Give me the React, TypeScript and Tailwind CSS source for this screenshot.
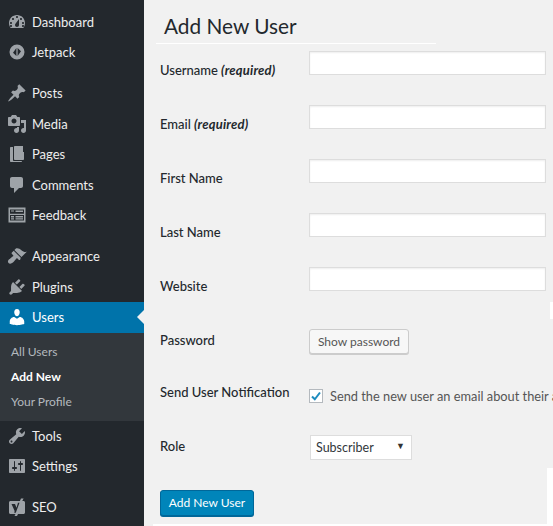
const font = { fontFamily: '"Lato", "Open Sans", sans-serif' };

function Glyph({ d, fill = "#9ea3a8" }: { d: string; fill?: string }) {
  return (
    <svg width="20" height="20" viewBox="0 0 20 20" fill={fill} className="shrink-0">
      <path d={d} fillRule="evenodd" />
    </svg>
  );
}

const icons: Record<string, string> = {
  dashboard:
    "M3.76 16h12.48c1.1-1.37 1.76-3.11 1.76-5 0-4.42-3.58-8-8-8s-8 3.58-8 8c0 1.89.66 3.63 1.76 5zM10 4c.55 0 1 .45 1 1s-.45 1-1 1-1-.45-1-1 .45-1 1-1zM6 6c.55 0 1 .45 1 1s-.45 1-1 1-1-.45-1-1 .45-1 1-1zm8 0c.55 0 1 .45 1 1s-.45 1-1 1-1-.45-1-1 .45-1 1-1zm-5.37 5.55L12 7v6c0 1.1-.9 2-2 2s-2-.9-2-2c0-.57.24-1.08.63-1.45zM4 10c.55 0 1 .45 1 1s-.45 1-1 1-1-.45-1-1 .45-1 1-1zm12 0c.55 0 1 .45 1 1s-.45 1-1 1-1-.45-1-1 .45-1 1-1zm-12 3c.55 0 1 .45 1 1s-.45 1-1 1-1-.45-1-1 .45-1 1-1zm12 0c.55 0 1 .45 1 1s-.45 1-1 1-1-.45-1-1 .45-1 1-1z",
  jetpack:
    "M10 2.5a7.5 7.5 0 1 0 0 15 7.5 7.5 0 0 0 0-15zM9.4 6v8L6 10.8zM10.6 14V6L14 9.2z",
  posts:
    "M10.44 3.02l1.82-1.82 6.36 6.35-1.83 1.82c-1.05-.68-2.48-.57-3.41.36l-.75.75c-.92.93-1.04 2.35-.35 3.41l-1.83 1.82-2.41-2.41-2.8 2.79c-.42.42-3.38 2.71-3.8 2.29s1.86-3.39 2.28-3.81l2.79-2.79L4.1 9.36l1.83-1.82c1.05.69 2.48.57 3.4-.36l.75-.75c.93-.92 1.05-2.35.36-3.41z",
  media:
    "M13 11V4c0-.55-.45-1-1-1h-1.67L9 1H5L3.67 3H2c-.55 0-1 .45-1 1v7c0 .55.45 1 1 1h10c.55 0 1-.45 1-1zM7 4.5c1.38 0 2.5 1.12 2.5 2.5S8.38 9.5 7 9.5 4.5 8.38 4.5 7 5.62 4.5 7 4.5zM14 6h5v10.5c0 1.38-1.12 2.5-2.5 2.5S14 17.88 14 16.5s1.12-2.5 2.5-2.5c.17 0 .34.02.5.05V9h-3V6zm-4 8.05V13h2v3.5c0 1.38-1.12 2.5-2.5 2.5S7 17.88 7 16.5 8.12 14 9.5 14c.17 0 .34.02.5.05z",
  pages:
    "M16 8V2h-8c-.55 0-1 .45-1 1v12c0 .55.45 1 1 1h8c.55 0 1-.45 1-1V8zM6 3H4c-.55 0-1 .45-1 1v13c0 .55.45 1 1 1h10c.55 0 1-.45 1-1H7c-.55 0-1-.45-1-1z",
  comments:
    "M5 2h9c1.1 0 2 .9 2 2v7c0 1.1-.9 2-2 2h-2l-5 5v-5H5c-1.1 0-2-.9-2-2V4c0-1.1.9-2 2-2z",
  feedback:
    "M1.5 2.5h17v15h-17zM3 4.5v4.2h14V4.5zM3 10v5.5h14V10zM4 5.5h3v1H4zM8.5 5.5h7.5v1.5H8.5zM4 11h3v1.5H4zM4 13.3h3v1.2H4zM8.5 11h7.5v1.5H8.5zM8.5 13.3h7.5v1.2H8.5z",
  appearance:
    "M14.48 11.06L7.41 3.99l1.5-1.5c.5-.56 2.3-.47 3.51.32 1.21.8 1.43 1.28 2.91 2.1 1.18.64 2.45 1.26 4.45.85zm-.71.71L6.7 4.7 4.93 6.47c-.39.39-.39 1.02 0 1.41l1.06 1.06c.39.39.39 1.03 0 1.42-.6.6-1.43 1.11-2.21 1.69-.35.26-.7.53-1.01.84C1.43 13.23.13 15.66 1.53 17.06c1.41 1.41 3.85.13 5.18-1.21.31-.31.58-.66.84-1.01.58-.78 1.09-1.61 1.69-2.21.39-.39 1.03-.39 1.42 0l1.06 1.06c.39.39 1.02.39 1.41 0z",
  plugins:
    "M13.11 4.36L9.87 7.6 8 5.73l3.24-3.24c.35-.34 1.05-.2 1.56.32.52.51.66 1.21.31 1.55zm-8 1.77l.91-1.12 9.01 9.01-1.19.84c-.71.71-2.63 1.16-3.82 1.16H6.14L4.9 17.26c-.59.59-1.54.59-2.12 0-.59-.58-.59-1.53 0-2.12l1.24-1.24v-3.88c0-1.13.4-3.19 1.09-3.89zm7.26 3.97l3.24-3.24c.34-.35 1.04-.21 1.55.31.52.51.66 1.21.31 1.55l-3.24 3.25z",
  users:
    "M10 9.25c-2.27 0-2.73-3.44-2.73-3.44C7 4.02 7.82 2 9.97 2c2.16 0 2.98 2.02 2.71 3.81 0 0-.41 3.44-2.68 3.44zm0 2.57L12.72 10c2.39 0 4.52 2.33 4.52 4.53v2.49s-3.65 1.13-7.24 1.13c-3.65 0-7.24-1.13-7.24-1.13v-2.49c0-2.25 1.94-4.48 4.47-4.48z",
  tools:
    "M16.68 9.77c-1.34 1.34-3.3 1.67-4.95.99l-5.41 6.52c-.99.99-2.59.99-3.58 0s-.99-2.59 0-3.57l6.52-5.42c-.68-1.65-.35-3.61.99-4.95 1.28-1.28 3.12-1.62 4.72-1.06l-2.89 2.89 2.82 2.82 2.86-2.87c.53 1.58.18 3.39-1.08 4.65zM3.81 16.21c.4.39 1.04.39 1.43 0 .4-.4.4-1.04 0-1.43-.39-.4-1.03-.4-1.43 0-.39.39-.39 1.03 0 1.43z",
  settings:
    "M18 16V4c0-.55-.45-1-1-1H3c-.55 0-1 .45-1 1v12c0 .55.45 1 1 1h14c.55 0 1-.45 1-1zM8 11h1c.55 0 1 .45 1 1s-.45 1-1 1H8v1.5c0 .28-.22.5-.5.5s-.5-.22-.5-.5V13H6c-.55 0-1-.45-1-1s.45-1 1-1h1V5.5c0-.28.22-.5.5-.5s.5.22.5.5V11zm5-2h-1c-.55 0-1-.45-1-1s.45-1 1-1h1V5.5c0-.28.22-.5.5-.5s.5.22.5.5V7h1c.55 0 1 .45 1 1s-.45 1-1 1h-1v5.5c0 .28-.22.5-.5.5s-.5-.22-.5-.5V9z",
  seo:
    "M3.5 4h9.4L14 1.5h2.6L15.3 4h1.2c.8 0 1.5.7 1.5 1.5v10c0 .8-.7 1.5-1.5 1.5H11l-1 2H7.5l1-2h-5C2.7 17 2 16.3 2 15.5v-10C2 4.7 2.7 4 3.5 4zM4.5 7l2.8 6.2c.3.6.4 1 .2 1.6l-.3.9h1.6l3.7-10H11l-1.5 5L8 7z",
};

function MenuItem({ icon, label, gap, active }: { icon: string; label: string; gap?: string; active?: boolean }) {
  return (
    <div className={`relative flex h-[30.5px] items-center pl-[7px] ${gap ?? ""} ${active ? "bg-[#0073aa] text-white" : "text-[#eeeeee]"}`}>
      <div className="flex w-[25px] justify-start">
        <Glyph d={icons[icon]} fill={active ? "#ffffff" : "#9ea3a8"} />
      </div>
      <span className="text-[13px] leading-[18px]">{label}</span>
      {active && (
        <span className="absolute right-0 top-[8px] h-0 w-0 border-y-[7px] border-r-[7px] border-y-transparent border-r-[#f1f1f1]" />
      )}
    </div>
  );
}

function Label({ children, className = "" }: { children: React.ReactNode; className?: string }) {
  return <div className={`w-[149px] shrink-0 text-[13px] font-medium leading-[18px] text-[#23282d] ${className}`}>{children}</div>;
}

function TextRow({ label }: { label: React.ReactNode }) {
  return (
    <div className="flex h-[54px] items-start">
      <Label className="pt-[10px]">{label}</Label>
      <div className="h-[24px] w-[237px] border border-[#dddddd] bg-white shadow-[inset_0_1px_2px_rgba(0,0,0,0.07)]" />
    </div>
  );
}

const Req = () => <em className="font-bold tracking-[0.2px]"> (required)</em>;

export default function App() {
  return (
    <div className="relative flex h-[526px] w-[553px] overflow-hidden bg-[#f1f1f1]" style={font}>
      <aside className="flex w-[144px] shrink-0 flex-col bg-[#23282d] pt-[6.5px]">
        <MenuItem icon="dashboard" label="Dashboard" />
        <MenuItem icon="jetpack" label="Jetpack" />
        <MenuItem icon="posts" label="Posts" gap="mt-[10.5px]" />
        <MenuItem icon="media" label="Media" />
        <MenuItem icon="pages" label="Pages" />
        <MenuItem icon="comments" label="Comments" />
        <MenuItem icon="feedback" label="Feedback" />
        <MenuItem icon="appearance" label="Appearance" gap="mt-[10.5px]" />
        <MenuItem icon="plugins" label="Plugins" />
        <MenuItem icon="users" label="Users" active />
        <div className="flex h-[88px] flex-col justify-center gap-[7px] bg-[#32373c] pl-[11px] text-[12px] leading-[18px] text-[#b4b9be]">
          <div>All Users</div>
          <div className="font-bold text-white">Add New</div>
          <div>Your Profile</div>
        </div>
        <MenuItem icon="tools" label="Tools" />
        <MenuItem icon="settings" label="Settings" />
        <MenuItem icon="seo" label="SEO" gap="mt-[10px]" />
      </aside>
      <main className="flex-1 pl-[16px]">
        <div className="ml-[-4px] w-[280px] border-b border-white pb-[2px] pl-[8px] pt-[11px]">
          <h1 className="text-[20.8px] font-normal leading-[30px] text-[#23282d]">Add New User</h1>
        </div>
        <div className="pt-[7px]">
          <TextRow label={<>Username<Req /></>} />
          <TextRow label={<>Email<Req /></>} />
          <TextRow label="First Name" />
          <TextRow label="Last Name" />
          <TextRow label="Website" />
          <div className="flex h-[52px] items-start">
            <Label className="pt-[10px]">Password</Label>
            <div className="mt-[8px] flex h-[25px] w-[100px] items-center justify-center rounded-[3px] border border-[#cccccc] bg-[#f7f7f7] text-[12px] text-[#555555] shadow-[0_1px_0_#cccccc]">Show password</div>
          </div>
          <div className="flex h-[54px] items-start">
            <Label className="pt-[10px]">Send User Notification</Label>
            <div className="mt-[14px] flex items-center whitespace-nowrap text-[12.8px] leading-[18px] text-[#555555]">
              <span className="mr-[7px] flex h-[14px] w-[14px] shrink-0 items-center justify-center border border-[#b4b9be] bg-white">
                <svg width="12" height="12" viewBox="0 0 12 12" fill="none"><path d="M2 6.5l2.8 2.8L10 2.5" stroke="#1e8cbe" strokeWidth="2" /></svg>
              </span>
              Send the new user an email about their a
            </div>
          </div>
          <div className="flex h-[63px] items-start">
            <Label className="pt-[10px]">Role</Label>
            <div className="ml-[1px] mt-[8px] flex h-[25px] w-[102px] items-center justify-between border border-[#dddddd] bg-white pl-[5px] pr-[6px] text-[12.5px] text-[#32373c]">
              <span className="pt-[2px]">Subscriber</span>
              <span className="mb-[4px] text-[9px] leading-none text-[#333333]">▼</span>
            </div>
          </div>
          <div className="flex h-[26px] w-[94px] items-center justify-center rounded-[3px] border border-[#006799] bg-[#0085ba] text-[12px] text-white shadow-[0_1px_0_#006799]">Add New User</div>
        </div>
      </main>
      <div className="absolute left-[550px] top-[302px] h-[17px] w-[3px] bg-white" />
      <div className="absolute left-[547px] top-[468px] h-[58px] w-[6px] bg-white" />
      <div className="absolute left-[153px] top-[524px] h-[2px] w-[400px] bg-white" />
    </div>
  );
}
